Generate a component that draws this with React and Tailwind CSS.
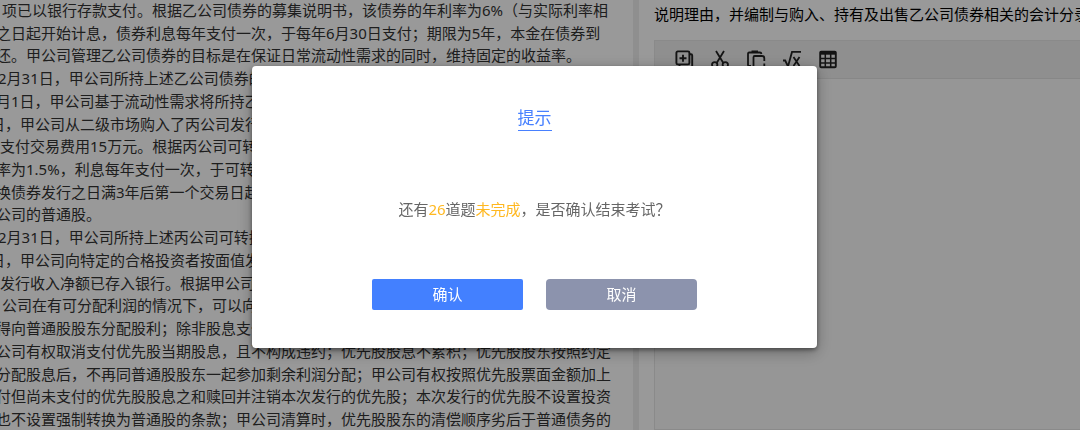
import React from 'react';

const passage = [
  { text: '项已以银行存款支付。根据乙公司债券的募集说明书，该债券的年利率为6%（与实际利率相', indent: 'indent-0.5' },
  { text: '之日起开始计息，债券利息每年支付一次，于每年6月30日支付；期限为5年，本金在债券到', indent: '-indent-1' },
  { text: '还。甲公司管理乙公司债券的目标是在保证日常流动性需求的同时，维持固定的收益率。', indent: '-indent-1' },
  { text: '2月31日，甲公司所持上述乙公司债券的公允', indent: '-indent-0.5' },
  { text: '月1日，甲公司基于流动性需求将所持乙公司', indent: '-indent-1' },
  { text: '日，甲公司从二级市场购入了丙公司发行的', indent: '-indent-2.5' },
  { text: '支付交易费用15万元。根据丙公司可转换债', indent: 'indent-0' },
  { text: '率为1.5%，利息每年支付一次，于可转换债', indent: '-indent-1' },
  { text: '换债券发行之日满3年后第一个交易日起，', indent: '-indent-1' },
  { text: '公司的普通股。', indent: '-indent-1' },
  { text: '2月31日，甲公司所持上述丙公司可转换债券', indent: '-indent-0.5' },
  { text: '日，甲公司向特定的合格投资者按面值发行', indent: '-indent-2.5' },
  { text: '发行收入净额已存入银行。根据甲公司发行', indent: 'indent-0' },
  { text: '公司在有可分配利润的情况下，可以向优先', indent: 'indent-0.5' },
  { text: '得向普通股股东分配股利；除非股息支付', indent: '-indent-1' },
  { text: '公司有权取消支付优先股当期股息，且不构成违约；优先股股息不累积；优先股股东按照约定', indent: '-indent-1' },
  { text: '分配股息后，不再同普通股股东一起参加剩余利润分配；甲公司有权按照优先股票面金额加上', indent: '-indent-1' },
  { text: '付但尚未支付的优先股股息之和赎回并注销本次发行的优先股；本次发行的优先股不设置投资', indent: '-indent-1' },
  { text: '也不设置强制转换为普通股的条款；甲公司清算时，优先股股东的清偿顺序劣后于普通债务的', indent: '-indent-1' },
];

const CopyIcon = () => (
  <svg viewBox="0 0 20 20" className="w-5 h-5" fill="none" stroke="currentColor" strokeWidth="1.9">
    <rect x="2.4" y="1.4" width="13" height="13" rx="1.4" />
    <path d="M9 4.8v7M5.5 8.3h7" />
    <path d="M15.5 4.2h1.5q1.2 0 1.2 1.2v11.6q0 1-1 1H6.5q-1 0-1-1V15" />
  </svg>
);

const CutIcon = () => (
  <svg viewBox="0 0 20 20" className="w-5 h-5" fill="none" stroke="currentColor" strokeWidth="1.8">
    <path d="M6 1l7.5 12.3M14 1L6.5 13.3" />
    <circle cx="4.7" cy="14.8" r="2.7" />
    <circle cx="15.3" cy="14.8" r="2.7" />
  </svg>
);

const PasteIcon = () => (
  <svg viewBox="0 0 20 20" className="w-5 h-5" fill="none" stroke="currentColor" strokeWidth="1.8">
    <path d="M5 16H3q-1 0-1-1V4q0-1.5 1.2-1.5H14q1.2 0 1.5 1.5" />
    <path d="M5.5 1.7h6.5" strokeWidth="2.4" />
    <path d="M7.5 18V7.2q0-1.2 1.2-1.2h7.3q2.3 0 2.3 2.3v2.7M18.3 13.5v4.5H7.5" />
  </svg>
);

const FormulaIcon = () => (
  <svg viewBox="0 0 20 20" className="w-5 h-5" fill="none" stroke="currentColor" strokeWidth="1.8">
    <path d="M1 10.5h2.2l2.8 6L10 1.9h9" />
    <path d="M11.5 7l6 9M17.5 7l-6 9" />
  </svg>
);

const TableIcon = () => (
  <svg viewBox="0 0 20 20" className="w-5 h-5" fill="none" stroke="currentColor" strokeWidth="1.9">
    <rect x="2.2" y="1.6" width="15.6" height="15.6" rx="1" />
    <path d="M2 3h16" strokeWidth="3.4" />
    <path d="M2 8.6h16M2 13h16M7.3 4v13M12.7 4v13" strokeWidth="1.5" />
  </svg>
);

const tools = [
  { label: '复制', Icon: CopyIcon },
  { label: '剪切', Icon: CutIcon },
  { label: '粘贴', Icon: PasteIcon },
  { label: '公式', Icon: FormulaIcon },
  { label: '表格', Icon: TableIcon },
];

const Passage = () => (
  <section className="w-[633px] shrink-0 h-full flex flex-col justify-between overflow-hidden text-[#333]">
    {passage.map((line) => (
      <p key={line.text} className={`leading-[21px] whitespace-nowrap ${line.indent}`}>
        {line.text}
      </p>
    ))}
  </section>
);

const AnswerEditor = () => (
  <section className="flex-1 min-w-0 flex flex-col pl-[15px] overflow-hidden text-black">
    <p className="pt-1 pb-4 leading-5 whitespace-nowrap">
      说明理由，并编制与购入、持有及出售乙公司债券相关的会计分录。
    </p>
    <div className="flex-1 flex flex-col border border-r-0 border-[#e6e6e6] bg-[#fafafa]">
      <div className="h-[38px] shrink-0 flex items-center gap-4 px-[19px] border-b border-[#e2e2e2] bg-[#eee] text-[#222]">
        {tools.map(({ label, Icon }) => (
          <button key={label} type="button" aria-label={label}>
            <Icon />
          </button>
        ))}
      </div>
      <textarea aria-label="答案" className="flex-1 p-2 resize-none outline-none" />
    </div>
  </section>
);

const ConfirmDialog = () => (
  <div className="fixed inset-0 flex items-center justify-center pr-[11px] pb-4 bg-black/40">
    <div
      role="dialog"
      aria-modal="true"
      aria-labelledby="dialog-title"
      className="w-[565px] flex flex-col items-center pt-10 pb-[38px] bg-white rounded shadow-[0_2px_4px_rgba(0,0,0,0.4),0_4px_16px_rgba(0,0,0,0.3)]"
    >
      <h2 id="dialog-title" className="text-[17px] leading-6 text-[#4780ff] border-b border-[#4780ff]">
        提示
      </h2>
      <p className="mt-[66px] leading-6 text-[#666]">
        还有<span className="text-[#ffb820]">26</span>道题<span className="text-[#ffb820]">未完成</span>，是否确认结束考试？
      </p>
      <div className="mt-[58px] flex gap-[23px] text-white">
        <button type="button" className="w-[151px] h-[31px] rounded-xs bg-[#4380ff]">
          确认
        </button>
        <button type="button" className="w-[151px] h-[31px] rounded bg-[#8c93ad]">
          取消
        </button>
      </div>
    </div>
  </div>
);

const App = () => {
  return (
    <div className="h-screen flex overflow-hidden bg-white text-[15px] font-['Noto_Sans','Noto_Sans_CJK_SC',sans-serif]">
      <Passage />
      <div className="w-1.5 shrink-0 bg-[#eee]" />
      <AnswerEditor />
      <ConfirmDialog />
    </div>
  );
};

export default App;
